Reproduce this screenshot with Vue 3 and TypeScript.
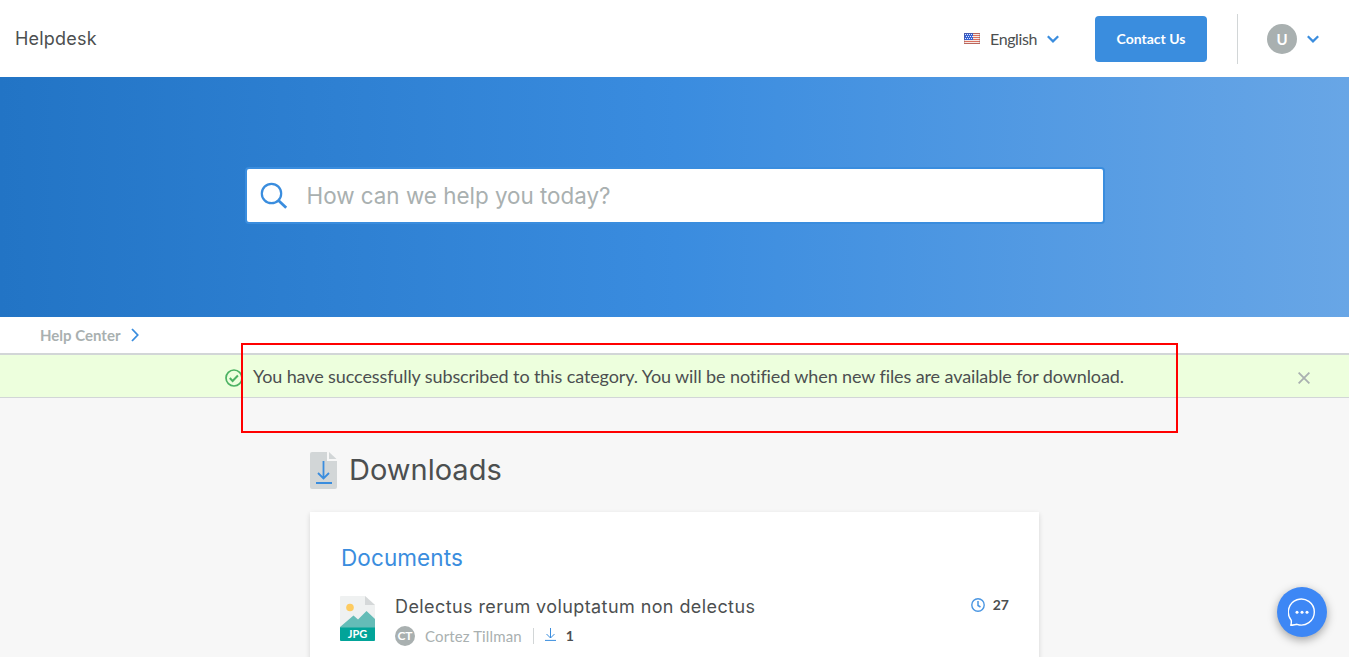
<script setup lang="ts">
import { ref } from 'vue'

interface DownloadFile {
  title: string
  author: string
  initials: string
  downloads: number
  age: string
}

const query = ref('')
const files: DownloadFile[] = [
  {
    title: 'Delectus rerum voluptatum non delectus',
    author: 'Cortez Tillman',
    initials: 'CT',
    downloads: 1,
    age: '27',
  },
]
</script>

<template>
  <div class="page">
    <header class="header">
      <div class="brand">Helpdesk</div>
      <button class="language" type="button">
        <svg class="flag" width="16" height="11" viewBox="0 0 16 11" shape-rendering="crispEdges">
          <rect width="16" height="11" fill="#f6e9e6" />
          <path d="M0 .5h16M0 2.5h16M0 4.5h16M0 6.5h16M0 8.5h16M0 10.5h16" stroke="#d9705f" />
          <rect width="9" height="7" fill="#3561d3" />
          <path d="M1 1.5h8M2 3.5h7M1 5.5h8" stroke="#dfe9ff" stroke-dasharray="1 1" />
          <path d="M0 .5h16M.5 0v11M15.5 0v11M0 10.5h16" stroke="#754f58" stroke-opacity=".3" />
        </svg>
        <span class="language-name">English</span>
        <svg class="chevron" width="12" height="8" viewBox="0 0 12 8">
          <path d="M.8 1.2 6 6.4l5.2-5.2" />
        </svg>
      </button>
      <button class="contact" type="button">Contact Us</button>
      <div class="account">
        <span class="avatar">U</span>
        <svg class="chevron" width="12" height="8" viewBox="0 0 12 8">
          <path d="M.8 1.2 6 6.4l5.2-5.2" />
        </svg>
      </div>
    </header>

    <section class="hero">
      <label class="search">
        <svg width="28" height="28" viewBox="0 0 28 28" fill="none" stroke="#3a8dde">
          <circle cx="11.5" cy="11.5" r="9.7" stroke-width="2.2" />
          <path d="m18.5 18.5 7.7 7.2" stroke-width="2.8" />
        </svg>
        <input v-model="query" type="text" placeholder="How can we help you today?" />
      </label>
    </section>

    <nav class="breadcrumb">
      <span>Help Center</span>
      <svg width="8" height="14" viewBox="0 0 8 14">
        <path d="m1 1 5.7 6L1 13" fill="none" stroke="#3a8dde" stroke-width="1.8" />
      </svg>
    </nav>

    <div class="notice">
      <svg class="notice-check" width="18" height="18" viewBox="0 0 18 18" fill="none" stroke="#4cb263">
        <circle cx="9" cy="9" r="8" stroke-width="1.7" />
        <path d="m4.8 9 2.8 3 5.3-5.500" stroke-width="2" />
      </svg>
      <p>You have successfully subscribed to this category. You will be notified when new files are available for download.</p>
      <svg class="notice-close" width="12" height="12" viewBox="0 0 12 12">
        <path d="m.6.6 10.8 10.8M11.4.6.6 11.4" stroke="#a9b0b0" stroke-width="1.8" />
      </svg>
      <div class="highlight"></div>
    </div>

    <main class="content">
      <h1>
        <svg width="27" height="37" viewBox="0 0 27 37">
          <path d="M2 0h15v9h10v26a2 2 0 0 1-2 2H2a2 2 0 0 1-2-2V2a2 2 0 0 1 2-2z" fill="#d2d6d7" />
          <path d="M19 0v7h7.5z" fill="#d2d6d7" />
          <path d="M13.5 9v18M8 21l5.5 5.5L19 21M6 31h16" fill="none" stroke="#3a8dde" stroke-width="1.8" />
        </svg>
        <span>Downloads</span>
      </h1>

      <section class="card">
        <h2>Documents</h2>
        <article v-for="file in files" :key="file.title" class="file">
          <svg class="file-icon" width="35" height="45" viewBox="0 0 35 45">
            <path d="M1 0h24l10 9v35a1 1 0 0 1-1 1H1a1 1 0 0 1-1-1V1a1 1 0 0 1 1-1z" fill="#eff1f1" />
            <path d="M25 0v9h10z" fill="#d5d8d9" />
            <circle cx="10" cy="11.5" r="3.8" fill="#fdcb60" />
            <path d="m0 31 13.5-11.5 4.5 4 8.5-8.5 8.5 8v9H0z" fill="#64bcb7" />
            <path d="M0 31.500h35V44a1 1 0 0 1-1 1H1a1 1 0 0 1-1-1z" fill="#02a499" />
            <text x="17.500" y="42" text-anchor="middle" fill="#fff">JPG</text>
          </svg>
          <div class="file-body">
            <h3>{{ file.title }}</h3>
            <div class="meta">
              <span class="mini-avatar">{{ file.initials }}</span>
              <span class="author">{{ file.author }}</span>
              <span class="downloads">
                <svg width="11" height="13" viewBox="0 0 11 13">
                  <path d="M5.500 0v10M1.500 6l4 4 4-4M0 12.400h11" fill="none" stroke="#3a8dde" />
                </svg>
                <span>{{ file.downloads }}</span>
              </span>
            </div>
          </div>
          <div class="age">
            <svg width="14" height="14" viewBox="0 0 14 14" fill="none" stroke="#4a96e2">
              <circle cx="7" cy="7" r="6.200" stroke-width="1.400" />
              <path d="M7 3v4.500l2.500 1.500" stroke-width="1.500" />
            </svg>
            <span>{{ file.age }}</span>
          </div>
        </article>
      </section>
    </main>

    <button class="chat" type="button" aria-label="Chat">
      <svg width="28" height="29" viewBox="0 0 28 29">
        <path
          d="M2.700 27.200c.8-1.700.8-3.200.5-5A13 13 0 1 1 9 26.300c-2 .2-4 .9-6.300.9z"
          fill="none"
          stroke="#fff"
          stroke-width="1.400"
          stroke-linejoin="round"
        />
        <g fill="#fff">
          <circle cx="9" cy="14.200" r="1.500" />
          <circle cx="14" cy="14.200" r="1.500" />
          <circle cx="19" cy="14.200" r="1.500" />
        </g>
      </svg>
    </button>
  </div>
</template>

<style>
body {
  margin: 0;
  overflow: hidden;
}
</style>

<style scoped>
.page {
  position: relative;
  height: 657px;
  overflow: hidden;
  background: #f7f7f7;
  color: #4c4f50;
  font-family: Lato, "Liberation Sans", sans-serif;
}
button {
  border: 0;
  padding: 0;
  background: none;
  color: inherit;
  font: inherit;
}
svg {
  display: block;
  flex: none;
}
.header {
  display: flex;
  align-items: center;
  height: 77px;
  padding: 0 30px 0 15px;
  box-sizing: border-box;
  background: #fff;
}
.brand {
  margin-right: auto;
  font: 400 18px/24px Inter, sans-serif;
  letter-spacing: 0.2px;
}
.language {
  display: flex;
  align-items: center;
  margin-right: 36px;
  font-size: 16px;
  line-height: 20px;
  letter-spacing: -0.4px;
}
.language-name {
  width: 47px;
  margin: 0 10px;
}
.chevron path {
  fill: none;
  stroke: #3a8dde;
  stroke-width: 2.2;
}
.contact {
  width: 112px;
  height: 46px;
  margin-right: 30px;
  border-radius: 4px;
  background: #3a8dde;
  color: #fff;
  font-size: 14px;
  font-weight: 700;
}
.account {
  display: flex;
  align-items: center;
  gap: 10px;
  height: 50px;
  padding-left: 29px;
  border-left: 1px solid #d2d6d7;
}
.avatar {
  width: 30px;
  height: 30px;
  border-radius: 50%;
  background: #a9b0b0;
  color: #fff;
  font-size: 15px;
  font-weight: 700;
  line-height: 30px;
  text-align: center;
}
.hero {
  display: flex;
  justify-content: center;
  height: 240px;
  padding-top: 90px;
  box-sizing: border-box;
  background: linear-gradient(90deg, #2274c5 0%, #3a8cdf 50%, #68a6e6 100%);
}
.search {
  display: flex;
  align-items: center;
  gap: 19px;
  width: 860px;
  height: 57px;
  padding: 0 13px;
  box-sizing: border-box;
  border: 2px solid #3a8dde;
  border-radius: 4px;
  background: #fff;
}
.search input {
  flex: 1;
  min-width: 0;
  padding: 0;
  border: 0;
  outline: 0;
  background: none;
  color: #4c4f50;
  font: 400 22.4px/30px Inter, sans-serif;
}
.search input::placeholder {
  color: #a9b0b0;
  opacity: 1;
}
.breadcrumb {
  display: flex;
  align-items: center;
  gap: 11px;
  height: 36px;
  padding-left: 40px;
  border-bottom: 2px solid #d2d6d7;
  background: #fff;
  color: #a9b0b0;
  font-size: 15px;
  font-weight: 700;
}
.notice {
  position: relative;
  display: flex;
  align-items: center;
  height: 42px;
  padding: 0 39px 0 225px;
  border-bottom: 1px solid #d2d6d7;
  background: #edffdd;
}
.notice p {
  margin: 0 auto 0 10px;
  font-size: 18px;
  line-height: 24px;
  letter-spacing: -0.106px;
  white-space: nowrap;
}
.notice-check,
.notice-close {
  margin-top: 4px;
}
.highlight {
  position: absolute;
  left: 241px;
  top: -12px;
  width: 937px;
  height: 90px;
  box-sizing: border-box;
  border: 2px solid #f00;
}
.content {
  width: 729px;
  margin: 0 0 0 310px;
  padding-top: 54px;
}
h1,
h2,
h3 {
  margin: 0;
  font-family: Inter, sans-serif;
  font-weight: 400;
}
h1 {
  display: flex;
  align-items: center;
  gap: 12px;
  height: 37px;
  font-size: 29px;
}
h1 span {
  margin-top: -2px;
}
.card {
  height: 200px;
  margin-top: 23px;
  padding: 30px 30px 0;
  box-sizing: border-box;
  background: #fff;
  box-shadow: 0 2px 5px rgba(0, 0, 0, 0.14);
}
h2 {
  padding-left: 1px;
  color: #3a8dde;
  font-size: 22.5px;
  line-height: 32px;
  letter-spacing: 0.1px;
}
.file {
  display: flex;
  align-items: flex-start;
  margin-top: 22px;
}
.file-icon text {
  font: 700 11px Lato, sans-serif;
}
.file-body {
  flex: 1;
  margin-left: 20px;
}
h3 {
  font-size: 18px;
  line-height: 22px;
  letter-spacing: 0.41px;
}
.meta {
  display: flex;
  align-items: center;
  height: 20px;
  margin-top: 8px;
}
.mini-avatar {
  width: 20px;
  height: 20px;
  border-radius: 50%;
  background: #a9b0b0;
  color: #fff;
  font-size: 12px;
  font-weight: 700;
  line-height: 20px;
  text-align: center;
}
.author {
  margin-left: 10px;
  color: #a9b0b0;
  font-size: 15px;
  letter-spacing: 0.13px;
}
.downloads {
  display: flex;
  align-items: center;
  gap: 10px;
  height: 16px;
  margin-left: 11px;
  padding-left: 11px;
  border-left: 1px solid #d2d6d7;
  font-size: 14px;
  font-weight: 700;
}
.downloads svg {
  margin-top: -3px;
}
.downloads span,
.age span {
  margin-top: -2px;
}
.age {
  display: flex;
  align-items: center;
  gap: 8px;
  height: 18px;
  font-size: 14px;
  font-weight: 700;
}
.chat {
  position: absolute;
  right: 22px;
  bottom: 20px;
  display: grid;
  place-items: center;
  width: 50px;
  height: 50px;
  border-radius: 50%;
  background: #3d87f5;
  box-shadow: 0 3px 10px rgba(0, 0, 0, 0.35);
}
</style>
